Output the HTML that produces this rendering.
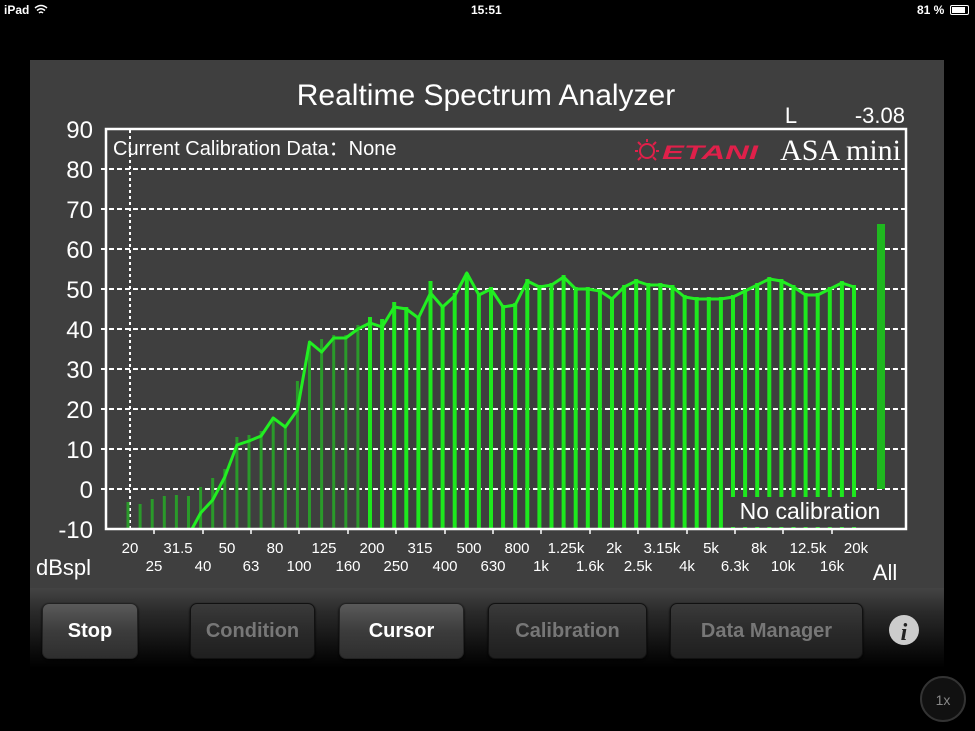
<!DOCTYPE html>
<html><head><meta charset="utf-8"><style>
html,body{margin:0;padding:0;background:#000;width:975px;height:731px;overflow:hidden;font-family:"Liberation Sans",sans-serif}
.btn{position:absolute;top:603px;height:54px;border-radius:7px;font-weight:bold;font-size:20px;text-align:center;line-height:54px;box-shadow:0 1px 2px #000}
.on{background:linear-gradient(#5a5a5a,#3c3c3c 50%,#2e2e2e);color:#fff;border:1px solid #222}
.off{background:linear-gradient(#3a3a3a,#2a2a2a 50%,#1f1f1f);color:#777;border:1px solid #111}
</style></head><body>
<div style="position:absolute;left:0;top:0;width:975px;height:20px;color:#fff;font-size:12px;font-weight:bold">
<span style="position:absolute;left:4px;top:3px">iPad</span>
<svg style="position:absolute;left:34px;top:4px" width="14" height="11"><path d="M1 4 Q7 -1 13 4 M3 6.5 Q7 3 11 6.5 M5 9 Q7 7 9 9" stroke="#fff" stroke-width="1.5" fill="none"/></svg>
<span style="position:absolute;left:471px;top:3px">15:51</span>
<span style="position:absolute;left:917px;top:3px">81 %</span>
<div style="position:absolute;left:950px;top:5px;width:17px;height:8px;border:1px solid #fff;border-radius:2px"><div style="margin:1px;width:13px;height:6px;background:#fff"></div></div>
</div>
<div style="position:absolute;left:30px;top:60px;width:914px;height:528px;background:#3f3f3f"></div>
<div style="position:absolute;left:30px;top:588px;width:914px;height:80px;background:linear-gradient(#444,#2a2a2a 30%,#080808 85%,#000)"></div>
<svg style="position:absolute;left:0;top:0" width="975" height="731" font-family="Liberation Sans, sans-serif">
<text x="486" y="105" fill="#fff" font-size="30" text-anchor="middle">Realtime Spectrum Analyzer</text>
<text x="791" y="123" fill="#fff" font-size="22" text-anchor="middle">L</text>
<text x="905" y="123" fill="#fff" font-size="22" text-anchor="end">-3.08</text>
<g fill="#fff" font-size="24" text-anchor="end">
<text x="93" y="138">90</text><text x="93" y="178">80</text><text x="93" y="218">70</text><text x="93" y="258">60</text><text x="93" y="298">50</text><text x="93" y="338">40</text><text x="93" y="378">30</text><text x="93" y="418">20</text><text x="93" y="458">10</text><text x="93" y="498">0</text><text x="93" y="538">-10</text>
</g>
<g stroke="#fff" stroke-width="2" stroke-dasharray="5,3">
<line x1="101" y1="169" x2="905" y2="169"/><line x1="101" y1="209" x2="905" y2="209"/><line x1="101" y1="249" x2="905" y2="249"/><line x1="101" y1="289" x2="905" y2="289"/><line x1="101" y1="329" x2="905" y2="329"/><line x1="101" y1="369" x2="905" y2="369"/><line x1="101" y1="409" x2="905" y2="409"/><line x1="101" y1="449" x2="905" y2="449"/><line x1="101" y1="489" x2="905" y2="489"/>
<line x1="130" y1="130" x2="130" y2="528" stroke-dasharray="3,3"/>
</g>
<g stroke-width="3" stroke="#2a9a2a">
<line x1="128" y1="502" x2="128" y2="529"/><line x1="140.1" y1="504" x2="140.1" y2="529"/><line x1="152.2" y1="499" x2="152.2" y2="529"/><line x1="164.3" y1="496" x2="164.3" y2="529"/><line x1="176.4" y1="495" x2="176.4" y2="529"/><line x1="188.5" y1="496" x2="188.5" y2="529"/><line x1="200.6" y1="487" x2="200.6" y2="529"/><line x1="212.7" y1="478" x2="212.7" y2="529"/><line x1="224.8" y1="469" x2="224.8" y2="529"/><line x1="236.9" y1="437" x2="236.9" y2="529"/><line x1="249" y1="435" x2="249" y2="529"/><line x1="261.1" y1="431" x2="261.1" y2="529"/><line x1="273.2" y1="417" x2="273.2" y2="529"/><line x1="285.3" y1="425" x2="285.3" y2="529"/><line x1="297.4" y1="381" x2="297.4" y2="529"/><line x1="309.5" y1="341" x2="309.5" y2="529"/><line x1="321.6" y1="339" x2="321.6" y2="529"/><line x1="333.7" y1="335" x2="333.7" y2="529"/><line x1="345.8" y1="335" x2="345.8" y2="529"/><line x1="357.9" y1="325" x2="357.9" y2="529"/>
</g>
<g stroke-width="4" stroke="#1ee81e">
<line x1="370" y1="317" x2="370" y2="529"/><line x1="382.1" y1="319" x2="382.1" y2="529"/><line x1="394.2" y1="302" x2="394.2" y2="529"/><line x1="406.3" y1="307" x2="406.3" y2="529"/><line x1="418.4" y1="317" x2="418.4" y2="529"/><line x1="430.5" y1="281" x2="430.5" y2="529"/><line x1="442.6" y1="305" x2="442.6" y2="529"/><line x1="454.7" y1="293" x2="454.7" y2="529"/><line x1="466.8" y1="273" x2="466.8" y2="529"/><line x1="478.9" y1="293" x2="478.9" y2="529"/><line x1="491" y1="287" x2="491" y2="529"/><line x1="503.1" y1="305" x2="503.1" y2="529"/><line x1="515.2" y1="303" x2="515.2" y2="529"/><line x1="527.3" y1="279" x2="527.3" y2="529"/><line x1="539.4" y1="285" x2="539.4" y2="529"/><line x1="551.5" y1="283" x2="551.5" y2="529"/><line x1="563.6" y1="275" x2="563.6" y2="529"/><line x1="575.7" y1="287" x2="575.7" y2="529"/><line x1="587.8" y1="287" x2="587.8" y2="529"/><line x1="599.9" y1="289" x2="599.9" y2="529"/><line x1="612" y1="297" x2="612" y2="529"/><line x1="624.1" y1="285" x2="624.1" y2="529"/><line x1="636.2" y1="279" x2="636.2" y2="529"/><line x1="648.3" y1="283" x2="648.3" y2="529"/><line x1="660.4" y1="283" x2="660.4" y2="529"/><line x1="672.5" y1="285" x2="672.5" y2="529"/><line x1="684.6" y1="295" x2="684.6" y2="529"/><line x1="696.7" y1="297" x2="696.7" y2="529"/><line x1="708.8" y1="297" x2="708.8" y2="529"/><line x1="720.9" y1="297" x2="720.9" y2="529"/><line x1="733" y1="295" x2="733" y2="529"/><line x1="745.1" y1="289" x2="745.1" y2="529"/><line x1="757.2" y1="283" x2="757.2" y2="529"/><line x1="769.3" y1="277" x2="769.3" y2="529"/><line x1="781.4" y1="279" x2="781.4" y2="529"/><line x1="793.5" y1="285" x2="793.5" y2="529"/><line x1="805.6" y1="293" x2="805.6" y2="529"/><line x1="817.7" y1="293" x2="817.7" y2="529"/><line x1="829.8" y1="287" x2="829.8" y2="529"/><line x1="841.9" y1="281" x2="841.9" y2="529"/><line x1="854" y1="285" x2="854" y2="529"/>
</g>
<rect x="877" y="224" width="8" height="265" fill="#1fb81f"/>
<polyline fill="none" stroke="#22ee22" stroke-width="3" stroke-linejoin="round" points="192,529 200.6,513 212.7,500 224.8,477 236.9,445 249,441 261.1,436 273.2,418 285.3,427 297.4,410 309.5,342 321.6,352 333.7,338 345.8,338 357.9,329 370,323 382.1,327 394.2,307 406.3,309 418.4,318 430.5,293 442.6,307 454.7,296 466.8,273 478.9,295 491,289 503.1,307 515.2,305 527.3,281 539.4,287 551.5,285 563.6,277 575.7,289 587.8,289 599.9,291 612,299 624.1,287 636.2,281 648.3,285 660.4,285 672.5,287 684.6,297 696.7,299 708.8,299 720.9,299 733,297 745.1,291 757.2,285 769.3,279 781.4,281 793.5,287 805.6,295 817.7,295 829.8,289 841.9,283 854,287"/>
<rect x="106" y="129" width="800" height="400" fill="none" stroke="#fff" stroke-width="2.5"/>
<rect x="728" y="497" width="170" height="30" fill="#3f3f3f"/>
<text x="810" y="519" fill="#fff" font-size="23" text-anchor="middle">No calibration</text>
<text x="113" y="155" fill="#fff" font-size="20">Current Calibration Data：None</text>
<g stroke="#e0204a" stroke-width="2" fill="none"><circle cx="647" cy="151" r="7"/><path d="M638 142l3 3M656 142l-3 3M638 160l3-3M656 160l-3-3M647 139v3M635 151h3M659 151h-3"/></g>
<text x="662" y="159" fill="#e0204a" font-size="19" font-style="italic" font-weight="bold" textLength="96" lengthAdjust="spacingAndGlyphs">ETANI</text>
<text x="901" y="160" fill="#fff" font-size="30" font-family="Liberation Serif, serif" text-anchor="end">ASA mini</text>
<g stroke="#fff" stroke-width="1.5">
<line x1="154" y1="529" x2="154" y2="534"/><line x1="203" y1="529" x2="203" y2="534"/><line x1="251" y1="529" x2="251" y2="534"/><line x1="299" y1="529" x2="299" y2="534"/><line x1="348" y1="529" x2="348" y2="534"/><line x1="396" y1="529" x2="396" y2="534"/><line x1="445" y1="529" x2="445" y2="534"/><line x1="493" y1="529" x2="493" y2="534"/><line x1="541" y1="529" x2="541" y2="534"/><line x1="590" y1="529" x2="590" y2="534"/><line x1="638" y1="529" x2="638" y2="534"/><line x1="687" y1="529" x2="687" y2="534"/><line x1="735" y1="529" x2="735" y2="534"/><line x1="783" y1="529" x2="783" y2="534"/><line x1="832" y1="529" x2="832" y2="534"/>
</g>
<g fill="#fff" font-size="15" text-anchor="middle">
<text x="130" y="553">20</text><text x="178" y="553">31.5</text><text x="227" y="553">50</text><text x="275" y="553">80</text><text x="324" y="553">125</text><text x="372" y="553">200</text><text x="420" y="553">315</text><text x="469" y="553">500</text><text x="517" y="553">800</text><text x="566" y="553">1.25k</text><text x="614" y="553">2k</text><text x="662" y="553">3.15k</text><text x="711" y="553">5k</text><text x="759" y="553">8k</text><text x="808" y="553">12.5k</text><text x="856" y="553">20k</text>
<text x="154" y="571">25</text><text x="203" y="571">40</text><text x="251" y="571">63</text><text x="299" y="571">100</text><text x="348" y="571">160</text><text x="396" y="571">250</text><text x="445" y="571">400</text><text x="493" y="571">630</text><text x="541" y="571">1k</text><text x="590" y="571">1.6k</text><text x="638" y="571">2.5k</text><text x="687" y="571">4k</text><text x="735" y="571">6.3k</text><text x="783" y="571">10k</text><text x="832" y="571">16k</text>
</g>
<text x="36" y="575" fill="#fff" font-size="22">dBspl</text>
<text x="885" y="580" fill="#fff" font-size="22" text-anchor="middle">All</text>
<circle cx="904" cy="630" r="15" fill="#ccc"/>
<text x="904" y="640" fill="#222" font-size="24" font-weight="bold" font-style="italic" font-family="Liberation Serif, serif" text-anchor="middle">i</text>
<circle cx="943" cy="699" r="22" fill="#111" stroke="#333" stroke-width="2"/>
<text x="943" y="705" fill="#888" font-size="14" text-anchor="middle">1x</text>
</svg>
<div class="btn on" style="left:42px;width:94px">Stop</div>
<div class="btn off" style="left:190px;width:123px">Condition</div>
<div class="btn on" style="left:339px;width:123px">Cursor</div>
<div class="btn off" style="left:488px;width:157px">Calibration</div>
<div class="btn off" style="left:670px;width:191px">Data Manager</div>
</body></html>
